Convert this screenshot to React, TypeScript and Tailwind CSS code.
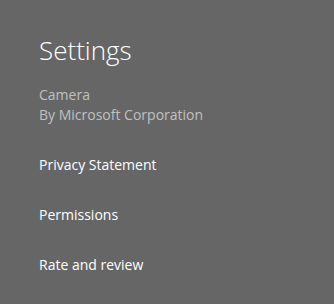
export default function App() {
  return (
    <div className="w-[334px] h-[304px] bg-[#666666] pl-[39px] pt-[32px]" style={{ fontFamily: '"Open Sans", "Noto Sans", sans-serif' }}>
      <div className="text-[26px] leading-[36px] font-light text-white">Settings</div>
      <div className="mt-[17px] text-[14px] leading-[20px] text-[#c0c0c0]">Camera</div>
      <div className="text-[14px] leading-[20px] text-[#c0c0c0]">By Microsoft Corporation</div>
      <div className="mt-[30px] flex flex-col gap-[30px] text-[14px] leading-[20px] text-white">
        <div>Privacy Statement</div>
        <div>Permissions</div>
        <div>Rate and review</div>
      </div>
    </div>
  );
}
